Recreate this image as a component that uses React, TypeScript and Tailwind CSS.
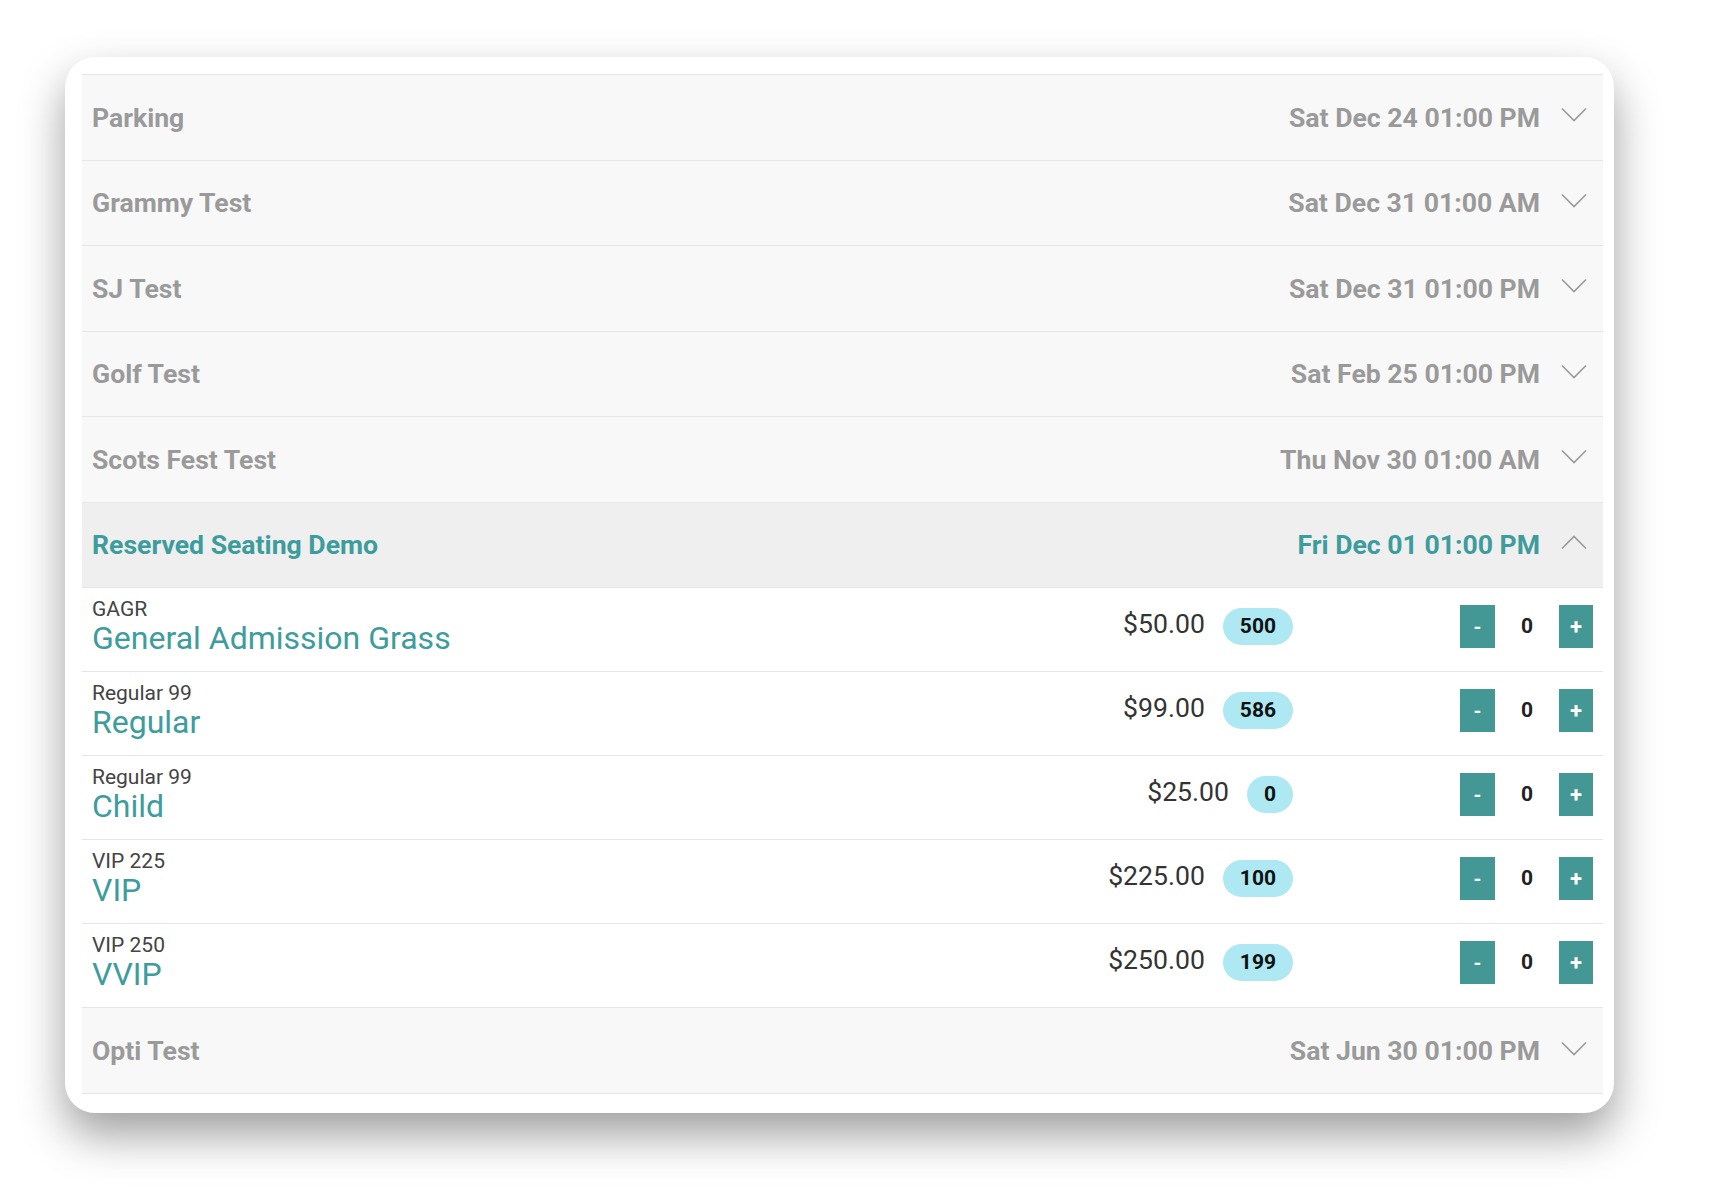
import React from "react";

type Ev = { name: string; date: string; open?: boolean };
type Ticket = { code: string; name: string; price: string; avail: string };

const tickets: Ticket[] = [
  { code: "GAGR", name: "General Admission Grass", price: "$50.00", avail: "500" },
  { code: "Regular 99", name: "Regular", price: "$99.00", avail: "586" },
  { code: "Regular 99", name: "Child", price: "$25.00", avail: "0" },
  { code: "VIP 225", name: "VIP", price: "$225.00", avail: "100" },
  { code: "VIP 250", name: "VVIP", price: "$250.00", avail: "199" },
];

const before: Ev[] = [
  { name: "Parking", date: "Sat Dec 24 01:00 PM" },
  { name: "Grammy Test", date: "Sat Dec 31 01:00 AM" },
  { name: "SJ Test", date: "Sat Dec 31 01:00 PM" },
  { name: "Golf Test", date: "Sat Feb 25 01:00 PM" },
  { name: "Scots Fest Test", date: "Thu Nov 30 01:00 AM" },
];

function Chevron({ up }: { up?: boolean }) {
  return (
    <svg width="26" height="15" viewBox="0 0 26 15" className="ml-[21px] mb-[5px] shrink-0">
      <polyline
        points={up ? "1,13.5 13,1.5 25,13.5" : "1,1.5 13,13.5 25,1.5"}
        fill="none"
        stroke="#9a9a9a"
        strokeWidth="1.6"
      />
    </svg>
  );
}

function EventRow({ ev, tall }: { ev: Ev; tall?: boolean }) {
  const active = !!ev.open;
  return (
    <div
      className={`flex items-center justify-between border-b border-[#e6e6e6] pl-[10px] pr-[16px] ${
        tall ? "h-[86px]" : "h-[85.5px]"
      } ${active ? "bg-[#efefef]" : "bg-[#f8f8f8]"}`}
    >
      <div
        className={`mt-[2px] text-[26.6px] font-bold leading-none ${
          active ? "text-[#3d9c9c]" : "text-[#9a9a9a]"
        }`}
      >
        {ev.name}
      </div>
      <div className="flex items-center">
        <div
          className={`mt-[2px] text-[26.6px] font-bold leading-none ${
            active ? "text-[#3d9c9c]" : "text-[#9a9a9a]"
          }`}
        >
          {ev.date}
        </div>
        <Chevron up={active} />
      </div>
    </div>
  );
}

function TicketRow({ t }: { t: Ticket }) {
  return (
    <div className="flex h-[84px] items-start justify-between border-b border-[#e6e6e6] bg-white pl-[10px] pr-[10px]">
      <div className="pt-[9px]">
        <div className="text-[21px] leading-[24px] text-[#444444]">{t.code}</div>
        <div className="text-[32px] leading-[35px] text-[#3d9c9c]">{t.name}</div>
      </div>
      <div className="mt-[17px] flex items-center">
        <div className="flex items-center justify-end">
          <div className="mb-[4px] text-[26.6px] leading-none text-[#333333]">{t.price}</div>
          <div className="ml-[18px] flex h-[37px] items-center rounded-full bg-[#ade8f3] px-[17px] text-[21px] font-bold text-[#111111]">
            {t.avail}
          </div>
        </div>
        <div className="ml-[167px] flex items-center">
          <button className="flex h-[43px] w-[35px] items-center justify-center bg-[#439794] text-[20px] font-bold leading-none text-white">
            -
          </button>
          <div className="w-[64px] text-center text-[21px] font-bold text-[#222222]">0</div>
          <button className="flex h-[43px] w-[34px] items-center justify-center bg-[#439794] text-[22px] font-bold leading-none text-white">
            +
          </button>
        </div>
      </div>
    </div>
  );
}

export default function App() {
  return (
    <div
      className="min-h-[1192px] w-full bg-white pl-[65px] pt-[57px]"
      style={{ fontFamily: "Roboto, 'Noto Sans', Arial, sans-serif" }}
    >
      <div className="w-[1549px] rounded-[30px] bg-white pb-[19px] pl-[17px] pr-[11px] pt-[17px] shadow-[0_22px_45px_rgba(0,0,0,0.38)]">
        <div className="border-t border-[#e6e6e6]">
          {before.map((ev) => (
            <EventRow key={ev.name} ev={ev} />
          ))}
          <EventRow ev={{ name: "Reserved Seating Demo", date: "Fri Dec 01 01:00 PM", open: true }} />
          {tickets.map((t) => (
            <TicketRow key={t.name} t={t} />
          ))}
          <EventRow ev={{ name: "Opti Test", date: "Sat Jun 30 01:00 PM" }} tall />
        </div>
      </div>
    </div>
  );
}
